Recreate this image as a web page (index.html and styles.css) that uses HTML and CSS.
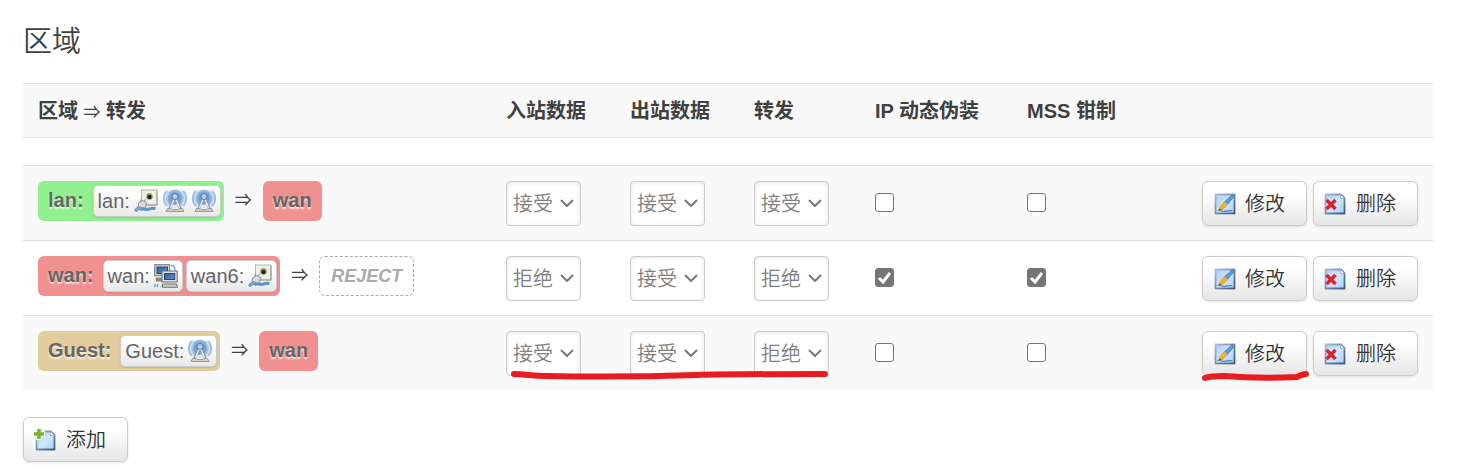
FILE: index.html
```html
<!DOCTYPE html>
<html lang="zh-CN">
<head>
<meta charset="utf-8">
<title>区域</title>
<link rel="stylesheet" href="styles.css">
</head>
<body>
<svg class="sprite" aria-hidden="true">
  <defs>
    <linearGradient id="tile" x1="0" y1="0" x2="1" y2="1"><stop offset="0" stop-color="#a9cdf3"/><stop offset=".5" stop-color="#cfe6ff"/><stop offset="1" stop-color="#a5d0ff"/></linearGradient>
    <linearGradient id="frame" x1="0" y1="0" x2="1" y2="1"><stop offset="0" stop-color="#a9bdd8"/><stop offset="1" stop-color="#3f5674"/></linearGradient>
    <linearGradient id="screen" x1="0" y1="0" x2="1" y2="1"><stop offset="0" stop-color="#2f5b9c"/><stop offset="1" stop-color="#5d93d6"/></linearGradient>
    <radialGradient id="waves"><stop offset="0" stop-color="#5d90cc"/><stop offset=".6" stop-color="#74a2d8"/><stop offset="1" stop-color="#a9c7e8"/></radialGradient>
  </defs>
  <symbol id="i-port" viewBox="0 0 24 24">
    <rect x="7.500" y="1" width="15.500" height="15" fill="#eeeee8" stroke="#b5b5ae"/>
    <path d="M8 16h15V2" fill="none" stroke="#989890"/>
    <circle cx="15.500" cy="7.500" r="3.200" fill="#8d8b50"/><circle cx="15.500" cy="8" r="2" fill="#1f1f18"/>
    <path d="M4.500 14l4-2.500 4 2-1 5-4.500 3-3-2z" fill="#dcdcdc" stroke="#8d8d8d"/>
    <path d="M7 12.500V10M10.500 12l1-2" stroke="#999" fill="none"/>
    <path d="M1.500 22.500c1-3 4-4 6-3 3 .7 5 1.500 8 .5 2-.8 3-1.200 6-.5" fill="none" stroke="#5f92cc" stroke-width="3.200"/>
    <path d="M2 21.500c1-2 3-3 5-2.500" fill="none" stroke="#9cc0e8"/>
  </symbol>
  <symbol id="i-wifi" viewBox="0 0 24 24">
    <path d="M4 1.500h16c5 5 5 11 0 16H4c-5-5-5-11 0-16z" fill="#cfdff1"/>
    <ellipse cx="12" cy="9.500" rx="9" ry="9" fill="url(#waves)"/>
    <path d="M3.500 2C-.2 7-.2 12 3.500 17M20.500 2c3.700 5 3.700 10 0 15" fill="none" stroke="#9bbce0" stroke-width="1.600"/>
    <path d="M6 4c-3 4-3 8 0 12M18 4c3 4 3 8 0 12" fill="none" stroke="#c3d8ef" stroke-width=".8"/>
    <path d="M12 8L6.500 20M12 8l5.500 12" fill="none" stroke="#8a96a3" stroke-width="3"/>
    <path d="M12 8L7 20M12 8l5 12M8 16l7 2M16 15l-7 3" fill="none" stroke="#e2e4e6" stroke-width="1.500"/>
    <circle cx="12" cy="7.500" r="3" fill="#b9cfe8" stroke="#5579a6"/>
    <path d="M3 22.500L4.500 19.500h3.500l1 1h6l1-1h3.500l1.500 3z" fill="#cfcfcb" stroke="#999994"/>
  </symbol>
  <symbol id="i-pcs" viewBox="0 0 24 24">
    <path d="M17 1.500c3 0 4 1.500 4 5" fill="none" stroke="#74a3df" stroke-width="1.500"/>
    <rect x=".7" y=".7" width="15" height="11" fill="#d5d5d0" stroke="#74746e"/>
    <rect x="3" y="3" width="10.500" height="6.500" fill="url(#screen)" stroke="#24477b"/>
    <path d="M1.500 14.500h8M2 16.500h7" stroke="#8a8a84" stroke-width="2"/>
    <rect x="8" y="7" width="15.200" height="11" fill="#dededa" stroke="#6c6c66"/>
    <rect x="10.500" y="9.500" width="10.200" height="6" fill="url(#screen)" stroke="#24477b"/>
    <path d="M8.500 20h14l1 3.300h-15z" fill="#c9c9c4" stroke="#777771"/>
    <path d="M1 20v3M3.500 20v3" stroke="#5e9be5" stroke-width="1.400"/><path d="M6 22h2" stroke="#9bbfe9"/>
  </symbol>
  <symbol id="i-edit" viewBox="0 0 24 24">
    <rect x="1" y="1" width="22" height="22" fill="#fff"/>
    <rect x="2.500" y="2.500" width="19" height="19" fill="url(#tile)" stroke="url(#frame)" stroke-width="1.800"/>
    <path d="M4.500 18.500c3-1 4 1.500 8 .7s5-1 7-.2" fill="none" stroke="#4f7fb8" stroke-width="1.200"/>
    <path d="M19.500 2.500l2 1.700-7.500 8.500-3-2.500z" fill="#5c9bdc" stroke="#3a74b4" stroke-width=".8"/>
    <path d="M11.500 9.500l3 3-5 5-3.500.8 1-3.600z" fill="#f3b42b" stroke="#d29a2c" stroke-width=".8"/>
    <path d="M6 18.500l.7-2.200 1.500 1.500z" fill="#4e4027"/>
  </symbol>
  <symbol id="i-delete" viewBox="0 0 24 24">
    <rect x="0" y="1" width="22" height="22" fill="#fff"/>
    <path d="M1.500 2.500H17L20.500 6v15.500h-19z" fill="url(#tile)" stroke="url(#frame)" stroke-width="1.800"/>
    <path d="M16.500 2.500V6.500h4z" fill="#fff" stroke="#8ca9cc" stroke-width=".8"/>
    <path d="M3 8l8 8M11 8l-8 8" stroke="#fff" stroke-width="5" opacity=".5"/>
    <path d="M2.500 8l9 9M11.500 8l-9 9" stroke="#d9252b" stroke-width="3.600"/>
  </symbol>
  <symbol id="i-add" viewBox="0 0 24 24">
    <rect x="0" y="1" width="22" height="22" fill="#fff"/>
    <path d="M2.500 3.500H17L20.500 7v14.500h-18z" fill="url(#tile)" stroke="url(#frame)" stroke-width="1.800"/>
    <path d="M16.500 3.500V7.500h4z" fill="#fff" stroke="#8ca9cc" stroke-width=".8"/>
    <path d="M5 0v12M0 6h11" stroke="#fff" stroke-width="6"/>
    <path d="M5 1v10M0 6h10" stroke="#74b72c" stroke-width="3.600"/>
  </symbol>
  <symbol id="i-chevron" viewBox="0 0 14 8"><path d="M1 1l6 6 6-6" fill="none" stroke="#777" stroke-width="2"/></symbol>
</svg>

<main class="page">
  <h2 class="title">区域</h2>
  <table class="zones">
    <colgroup><col class="col-zone"><col class="col-policy"><col class="col-policy"><col class="col-forward"><col class="col-masq"><col class="col-mss"><col></colgroup>
    <thead>
      <tr class="head"><th>区域 <span class="implies">⇒</span> 转发</th><th>入站数据</th><th>出站数据</th><th>转发</th><th>IP 动态伪装</th><th>MSS 钳制</th><th></th></tr>
      <tr class="spacer"><td colspan="7"></td></tr>
    </thead>
    <tbody>
      <tr class="row shaded">
        <td><div class="flow">
          <span class="zone green"><strong>lan:</strong><span class="nets"><span class="net">lan: <svg class="icon"><use href="#i-port"/></svg><svg class="icon"><use href="#i-wifi"/></svg><svg class="icon"><use href="#i-wifi"/></svg></span></span></span>
          <span class="arrow">⇒</span><span class="zone target"><strong>wan</strong></span>
        </div></td>
        <td><span class="picker"><select aria-label="lan 入站数据"><option>接受</option><option>拒绝</option></select><svg class="chevron"><use href="#i-chevron"/></svg></span></td>
        <td><span class="picker"><select aria-label="lan 出站数据"><option>接受</option><option>拒绝</option></select><svg class="chevron"><use href="#i-chevron"/></svg></span></td>
        <td><span class="picker"><select aria-label="lan 转发"><option>接受</option><option>拒绝</option></select><svg class="chevron"><use href="#i-chevron"/></svg></span></td>
        <td><input class="check" type="checkbox" aria-label="lan IP 动态伪装"></td>
        <td><input class="check" type="checkbox" aria-label="lan MSS 钳制"></td>
        <td><div class="actions"><button class="btn" type="button"><svg class="icon"><use href="#i-edit"/></svg>修改</button><button class="btn" type="button"><svg class="icon"><use href="#i-delete"/></svg>删除</button></div></td>
      </tr>
      <tr class="row">
        <td><div class="flow">
          <span class="zone red"><strong>wan:</strong><span class="nets"><span class="net">wan: <svg class="icon"><use href="#i-pcs"/></svg></span><span class="net">wan6: <svg class="icon"><use href="#i-port"/></svg></span></span></span>
          <span class="arrow">⇒</span><span class="zone reject">REJECT</span>
        </div></td>
        <td><span class="picker"><select aria-label="wan 入站数据"><option>接受</option><option selected>拒绝</option></select><svg class="chevron"><use href="#i-chevron"/></svg></span></td>
        <td><span class="picker"><select aria-label="wan 出站数据"><option>接受</option><option>拒绝</option></select><svg class="chevron"><use href="#i-chevron"/></svg></span></td>
        <td><span class="picker"><select aria-label="wan 转发"><option>接受</option><option selected>拒绝</option></select><svg class="chevron"><use href="#i-chevron"/></svg></span></td>
        <td><input class="check" type="checkbox" aria-label="wan IP 动态伪装" checked></td>
        <td><input class="check" type="checkbox" aria-label="wan MSS 钳制" checked></td>
        <td><div class="actions"><button class="btn" type="button"><svg class="icon"><use href="#i-edit"/></svg>修改</button><button class="btn" type="button"><svg class="icon"><use href="#i-delete"/></svg>删除</button></div></td>
      </tr>
      <tr class="row shaded">
        <td><div class="flow">
          <span class="zone tan"><strong>Guest:</strong><span class="nets"><span class="net">Guest: <svg class="icon"><use href="#i-wifi"/></svg></span></span></span>
          <span class="arrow">⇒</span><span class="zone target"><strong>wan</strong></span>
        </div></td>
        <td><span class="picker"><select aria-label="Guest 入站数据"><option>接受</option><option>拒绝</option></select><svg class="chevron"><use href="#i-chevron"/></svg>
          <svg class="mark mark-long" viewBox="0 0 325 12"><path d="M8 4C20 4 25 6 40 6C90 7 160 6 190 5S270 4 319 4" fill="none" stroke="#e81c1f" stroke-width="6" stroke-linecap="round"/></svg></span></td>
        <td><span class="picker"><select aria-label="Guest 出站数据"><option>接受</option><option>拒绝</option></select><svg class="chevron"><use href="#i-chevron"/></svg></span></td>
        <td><span class="picker"><select aria-label="Guest 转发"><option>接受</option><option selected>拒绝</option></select><svg class="chevron"><use href="#i-chevron"/></svg></span></td>
        <td><input class="check" type="checkbox" aria-label="Guest IP 动态伪装"></td>
        <td><input class="check" type="checkbox" aria-label="Guest MSS 钳制"></td>
        <td><div class="actions"><button class="btn" type="button"><svg class="icon"><use href="#i-edit"/></svg>修改<svg class="mark mark-short" viewBox="0 0 110 12"><path d="M3 7C8 5 14 5 22 5C45 7 75 7 95 6C99 4 101 3 104 3" fill="none" stroke="#e81c1f" stroke-width="6" stroke-linecap="round"/></svg></button><button class="btn" type="button"><svg class="icon"><use href="#i-delete"/></svg>删除</button></div></td>
      </tr>
    </tbody>
  </table>
  <button class="btn" type="button"><svg class="icon"><use href="#i-add"/></svg>添加</button>
</main>
</body>
</html>
```
FILE: styles.css
```css
* { box-sizing: border-box; }
body {
  margin: 0;
  background: #fff;
  color: #404040;
  font: 20px/28px "Liberation Sans", "Noto Sans CJK SC", sans-serif;
}
.sprite { position: absolute; width: 0; height: 0; }
.page { padding: 21px 29px 7px 23px; }
.title { margin: 0 0 20px; font-size: 29px; line-height: 42px; font-weight: 350; }

.zones {
  width: 100%;
  margin-bottom: 27px;
  table-layout: fixed;
  border-collapse: separate;
  border-spacing: 0;
}
.col-zone { width: 468px; }
.col-policy { width: 124px; }
.col-forward { width: 121px; }
.col-masq { width: 152px; }
.col-mss { width: 152px; }
.zones th, .zones td { border-top: 1px solid #ddd; text-align: left; vertical-align: top; }
.head { background: #f9f9f9; }
.head th { padding: 13px 0 12px 15px; font-weight: 700; white-space: nowrap; }
.implies { font-size: 17px; line-height: 20px; font-weight: 400; }
.spacer td { height: 28px; padding: 0; }
.row td { padding: 15px 0 14px 15px; }
.row td:last-child { padding-right: 15px; }
.shaded { background: #f9f9f9; }

.flow { display: flex; color: #666; }
.zone {
  display: flex;
  height: 40px;
  border-radius: 6px;
  line-height: 38px;
  white-space: nowrap;
  gap: 9px;
  padding: 0 3px 0 10px;
}
.zone strong { text-shadow: 0 2px 2px rgba(255, 255, 255, .8); }
.green { background: #90f090; }
.red, .target { background: #f09090; }
.tan { background: #e2cc9e; }
.target { padding: 0 10px; }
.reject {
  padding: 0 11px;
  border: 1px dashed #aaa;
  color: #aaa;
  font-size: 18px;
  font-style: italic;
  font-weight: 700;
}
.nets { display: flex; gap: 3px; padding: 4px 0; }
.net {
  display: flex;
  align-items: center;
  gap: 4px;
  padding: 0 4px;
  line-height: 28px;
  border: 1px solid #ccc;
  border-radius: 5px;
  background: linear-gradient(#fff 25%, #e8e8e8);
  box-shadow: 0 1px 2px rgba(0, 0, 0, .1);
}
.arrow { width: 39px; font-size: 17px; line-height: 40px; text-align: center; color: #404040; }
.icon { flex: none; width: 24px; height: 24px; }
.icon + .icon { margin-left: 1px; }

.picker { position: relative; display: block; width: 75px; }
.picker select {
  display: block;
  appearance: none;
  width: 100%;
  height: 45px;
  padding: 0 6px;
  border: 1px solid #ccc;
  border-radius: 4px;
  background: #fff;
  box-shadow: inset 0 1px 4px rgba(0, 0, 0, .1);
  color: #808080;
  font: inherit;
  font-weight: 350;
}
.chevron { position: absolute; top: 18px; right: 7px; width: 14px; height: 8px; pointer-events: none; }
.check {
  display: block;
  appearance: none;
  width: 19px;
  height: 19px;
  margin: 12px 0 0;
  border: 1px solid #767676;
  border-radius: 3px;
  background: #fff;
}
.check:checked {
  background: #767676 url("data:image/svg+xml,%3Csvg xmlns='http://www.w3.org/2000/svg' viewBox='0 0 17 17'%3E%3Cpath d='M3 9l4 4 7-9' fill='none' stroke='white' stroke-width='3'/%3E%3C/svg%3E") center / 17px 17px no-repeat;
}

.actions { display: flex; justify-content: flex-end; gap: 6px; }
.btn {
  position: relative;
  display: flex;
  align-items: center;
  gap: 8px;
  height: 45px;
  padding: 0 21px 0 10px;
  border: 1px solid #ccc;
  border-radius: 6px;
  background: linear-gradient(#fff 25%, #e6e6e6);
  box-shadow: 0 1px 3px rgba(0, 0, 0, .1);
  color: #333;
  font: inherit;
  font-weight: 350;
  white-space: nowrap;
}
.mark { position: absolute; height: 12px; pointer-events: none; }
.mark-long { top: 39px; left: 0; width: 325px; z-index: 1; }
.mark-short { top: 39px; left: -1px; width: 110px; z-index: 1; }
```
